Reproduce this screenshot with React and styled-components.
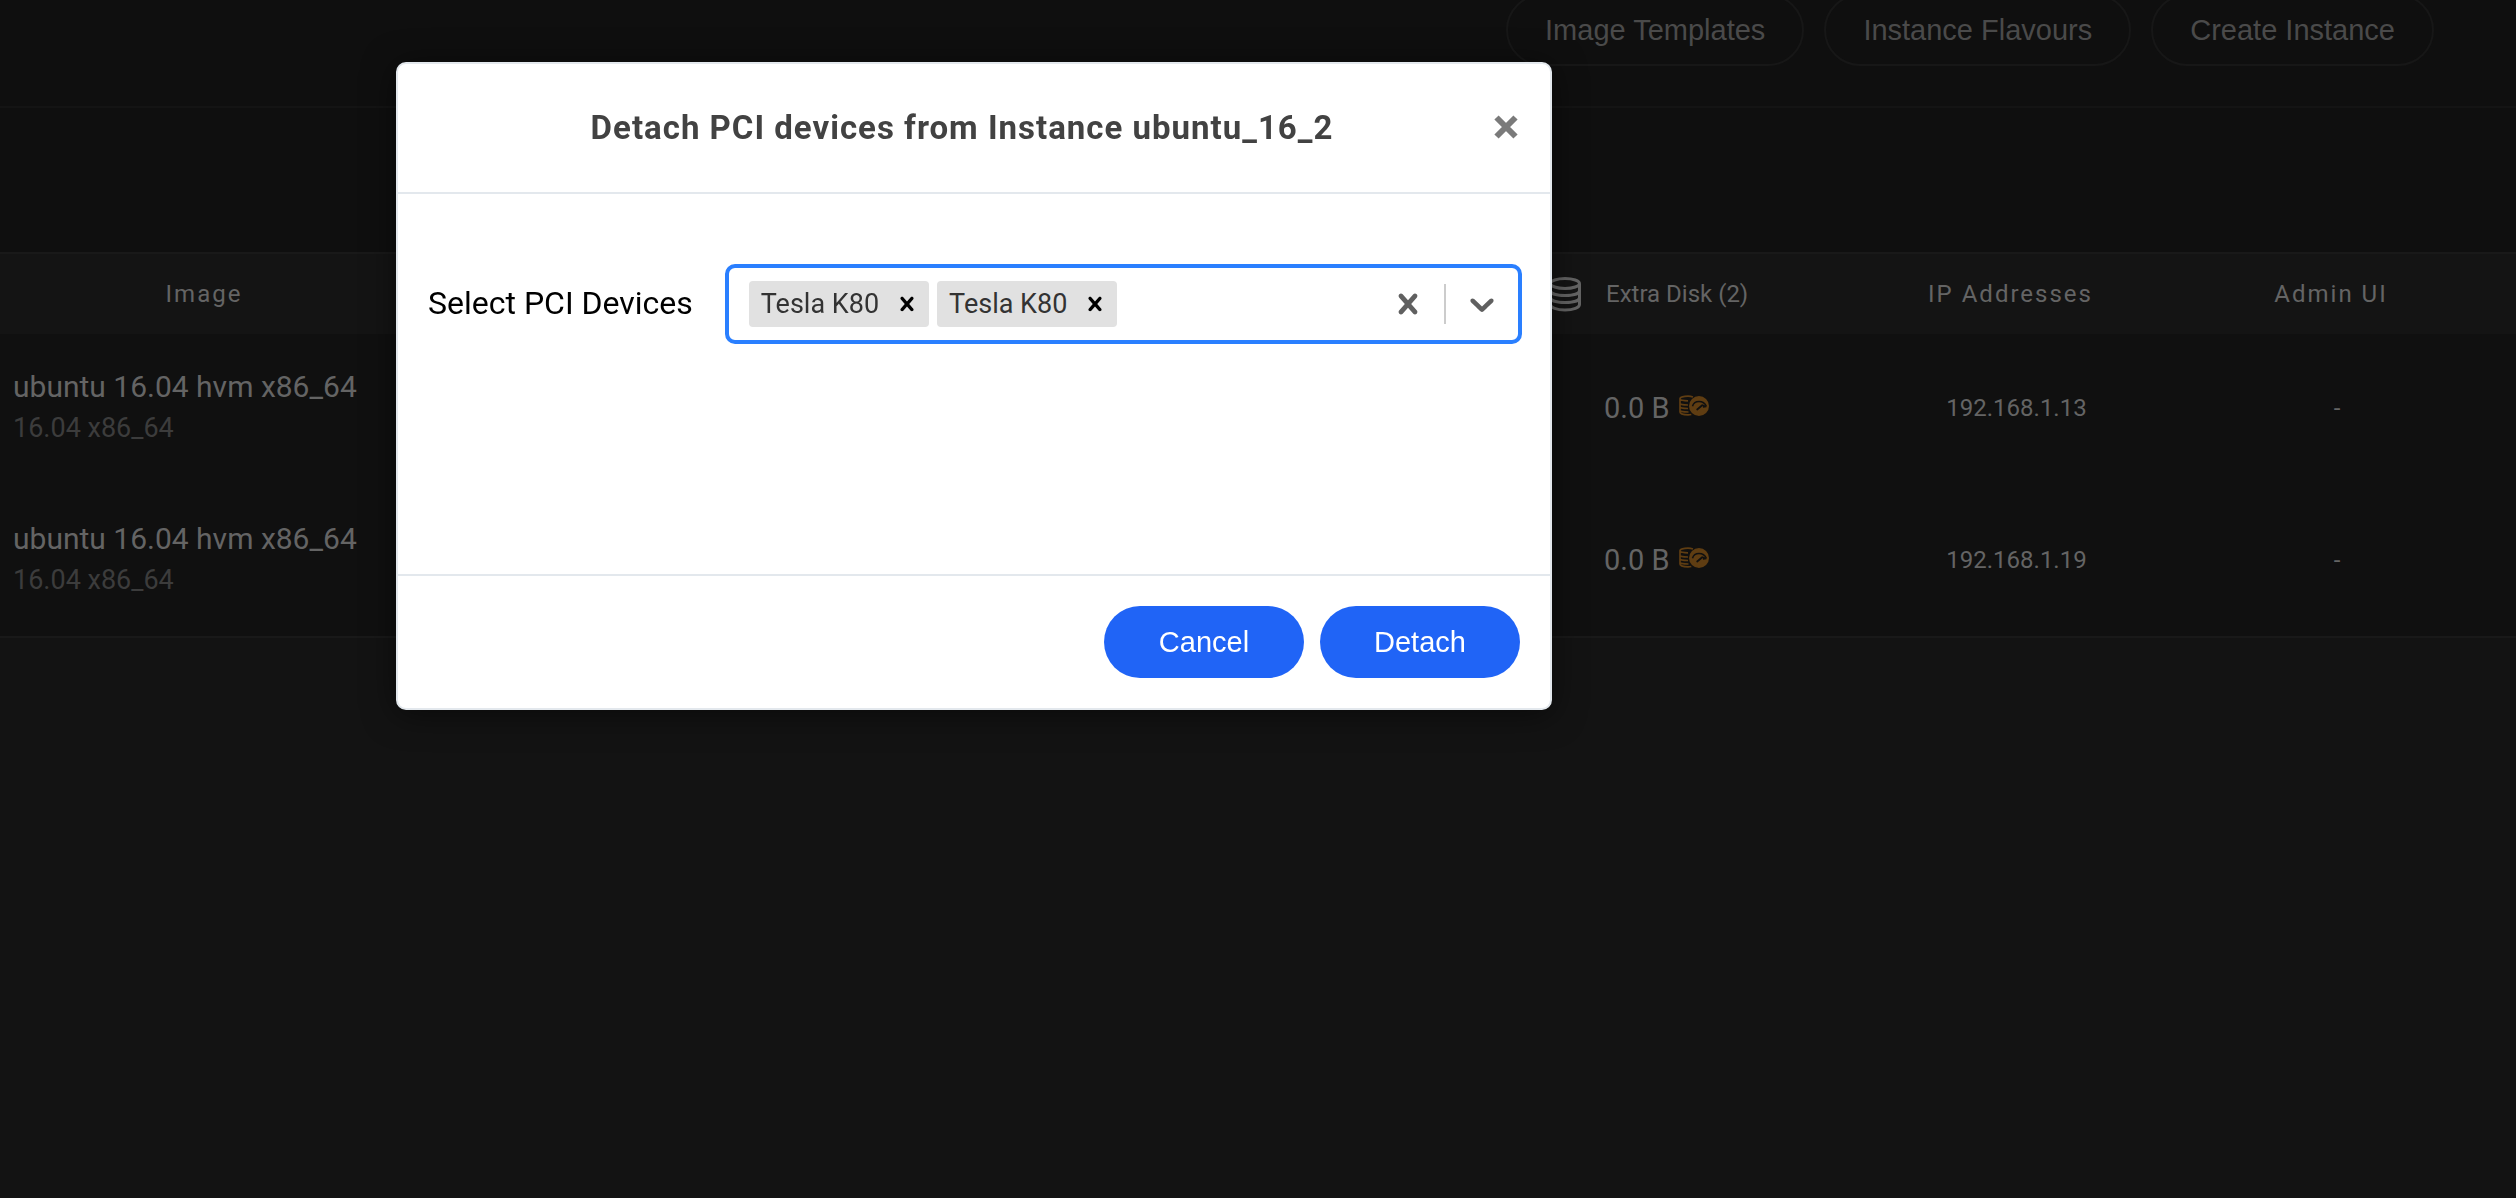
import React, {useState} from 'react';
import styled, {createGlobalStyle} from 'styled-components';

const columns = [
  {key: 'image', label: 'Image', width: 408},
  {key: 'spec', label: ''},
  {key: 'disk', label: 'Extra Disk (2)', width: 230},
  {key: 'ip', label: 'IP Addresses', width: 481},
  {key: 'admin', label: 'Admin UI', width: 160},
  {key: 'more', label: '', width: 105},
];

const instances = [
  {id: 1, image: 'ubuntu 16.04 hvm x86_64', version: '16.04 x86_64', disk: '0.0 B', ip: '192.168.1.13', admin: '-'},
  {id: 2, image: 'ubuntu 16.04 hvm x86_64', version: '16.04 x86_64', disk: '0.0 B', ip: '192.168.1.19', admin: '-'},
];

const DatabaseIcon = () => (
  <svg width="34" height="36" viewBox="0 0 34 36" fill="none" stroke="currentColor" strokeWidth="3">
    <ellipse cx="17" cy="7.5" rx="14.5" ry="5"/>
    <path d="M2.5 8v20.500c0 3 6 5.500 14.500 5.500s14.500-2.500 14.500-5.500V8"/>
    <path d="M2.500 14.500c0 3 6 5 14.500 5s14.500-2 14.500-5M2.500 21.500c0 3 6 5 14.500 5s14.500-2 14.500-5"/>
  </svg>
);

const DiskSpeedIcon = () => (
  <svg width="30" height="22" viewBox="0 0 30 22" fill="none" stroke="currentColor">
    <path
      strokeWidth="1.7"
      d="M14 2C12.500 1.500 11 1.200 9 1.200 4.500 1.200 1 2.200 1 3.500v13.500c0 1.600 3.500 2.800 8 2.800 1 0 2.300-.1 3.300-.3M1 3.500c0 1.400 3.500 2.300 8 2.300M1 8c0 1.200 3.500 2 8 2M1 11.500c0 1.200 3.500 2 8 2M1 15c0 1.200 3.500 2 8.500 2"
    />
    <circle cx="20" cy="11" r="10" fill="currentColor" stroke="none"/>
    <path d="M13.500 11.200c1-3.400 3.500-4.700 6.500-4.700s6 1.600 7.500 5" stroke="#101010" strokeWidth="1.500"/>
    <path d="M23.500 9.500c1.600 0 3 .8 4 2.700l-3.500.6z" fill="#101010" stroke="none"/>
    <path d="M18.200 14.500l5-4.200" stroke="#101010" strokeWidth="1.800" strokeLinecap="round"/>
  </svg>
);

const CrossIcon = ({size}) => (
  <svg width={size} height={size} viewBox="0 0 20 20" fill="currentColor">
    <path d="M14.348 14.849c-0.469 0.469-1.229 0.469-1.697 0l-2.651-3.030-2.651 3.029c-0.469 0.469-1.229 0.469-1.697 0-0.469-0.469-0.469-1.229 0-1.697l2.758-3.15-2.759-3.152c-0.469-0.469-0.469-1.228 0-1.697s1.228-0.469 1.697 0l2.652 3.031 2.651-3.031c0.469-0.469 1.228-0.469 1.697 0s0.469 1.229 0 1.697l-2.758 3.152 2.758 3.15c0.469 0.469 0.469 1.229 0 1.698z"/>
  </svg>
);

const ChevronIcon = () => (
  <svg width="40" height="40" viewBox="0 0 20 20" fill="currentColor">
    <path d="M4.516 7.548c0.436-0.446 1.043-0.481 1.576 0l3.908 3.747 3.908-3.747c0.533-0.481 1.141-0.446 1.574 0 0.436 0.445 0.408 1.197 0 1.615-0.406 0.418-4.695 4.502-4.695 4.502-0.217 0.223-0.502 0.335-0.787 0.335s-0.57-0.112-0.789-0.335c0 0-4.287-4.084-4.695-4.502s-0.436-1.17 0-1.615z"/>
  </svg>
);

const CloseIcon = () => (
  <svg width="24" height="24" viewBox="0 0 24 24" fill="none" stroke="currentColor" strokeWidth="6">
    <path d="M2.500 2.500l19 19M21.500 2.500l-19 19"/>
  </svg>
);

const InstancesPage = () => (
  <Page>
    <Toolbar>
      <OutlineButton type="button">Image Templates</OutlineButton>
      <OutlineButton type="button">Instance Flavours</OutlineButton>
      <OutlineButton type="button">Create Instance</OutlineButton>
    </Toolbar>
    <Table>
      <colgroup>
        {columns.map(({key, width}) => <col key={key} width={width}/>)}
      </colgroup>
      <thead>
        <tr>
          {columns.map(({key, label}) => (
            <HeadCell key={key}>
              {key === 'disk' ? (
                <DiskHead>
                  <DatabaseIcon/>
                  <DiskLabel>{label}</DiskLabel>
                </DiskHead>
              ) : label}
            </HeadCell>
          ))}
        </tr>
      </thead>
      <tbody>
        {instances.map((instance) => (
          <Row key={instance.id}>
            <ImageCell>
              <ImageName>{instance.image}</ImageName>
              <ImageVersion>{instance.version}</ImageVersion>
            </ImageCell>
            <Cell/>
            <Cell>
              <DiskSize>
                {instance.disk}
                <DiskSpeedIcon/>
              </DiskSize>
            </Cell>
            <Cell>{instance.ip}</Cell>
            <Cell>{instance.admin}</Cell>
            <Cell/>
          </Row>
        ))}
      </tbody>
    </Table>
  </Page>
);

const App = () => {
  const [devices, setDevices] = useState([
    {id: 1, name: 'Tesla K80'},
    {id: 2, name: 'Tesla K80'},
  ]);

  const onRemove = (id) => setDevices(devices.filter((device) => device.id !== id));

  return (
    <>
      <GlobalStyle/>
      <InstancesPage/>
      <Overlay>
        <Modal role="dialog" aria-labelledby="modal-title">
          <ModalHeader>
            <Title id="modal-title">Detach PCI devices from Instance ubuntu_16_2</Title>
            <CloseButton type="button" aria-label="Close"><CloseIcon/></CloseButton>
          </ModalHeader>
          <ModalBody>
            <Label htmlFor="pci-devices">Select PCI Devices</Label>
            <Select>
              <Values>
                {devices.map(({id, name}) => (
                  <Chip key={id}>
                    <ChipLabel>{name}</ChipLabel>
                    <ChipRemove type="button" aria-label={`Remove ${name}`} onClick={() => onRemove(id)}>
                      <CrossIcon size={28}/>
                    </ChipRemove>
                  </Chip>
                ))}
                <SelectInput id="pci-devices" type="text" autoComplete="off"/>
              </Values>
              <Indicator type="button" aria-label="Clear" onClick={() => setDevices([])}>
                <CrossIcon size={40}/>
              </Indicator>
              <Separator/>
              <Indicator type="button" aria-label="Open menu"><ChevronIcon/></Indicator>
            </Select>
          </ModalBody>
          <ModalFooter>
            <PrimaryButton type="button">Cancel</PrimaryButton>
            <PrimaryButton type="button">Detach</PrimaryButton>
          </ModalFooter>
        </Modal>
      </Overlay>
    </>
  );
};

export default App;

const GlobalStyle = createGlobalStyle`
  * {
    box-sizing: border-box;
  }

  body {
    margin: 0;
    background-color: #131313;
    font-family: Roboto, sans-serif;
  }

  button {
    font-family: "Liberation Sans", Arial, sans-serif;
    cursor: pointer;
  }

  svg {
    display: block;
    flex: none;
  }
`;

const Page = styled.div`
  overflow: hidden;
`;

const Toolbar = styled.div`
  display: flex;
  justify-content: flex-end;
  align-items: flex-end;
  gap: 20px;
  height: 108px;
  padding: 0 82px 40px;
  background-color: #0f0f0f;
  border-bottom: 2px solid #141414;
`;

const OutlineButton = styled.button`
  flex: none;
  height: 72px;
  padding: 0 37px;
  background: none;
  border: 2px solid #171717;
  border-radius: 36px;
  color: #4a4a4a;
  font-size: 29px;
`;

const Table = styled.table`
  width: 100%;
  border-top: 144px solid #0f0f0f;
  border-spacing: 0;
  table-layout: fixed;
  background-color: #101010;
`;

const HeadCell = styled.th`
  height: 82px;
  padding: 0;
  background-color: #141414;
  border-top: 2px solid #191919;
  color: #646464;
  font-size: 24px;
  font-weight: 400;
  letter-spacing: 2px;
`;

const DiskHead = styled.div`
  display: flex;
  align-items: center;
  gap: 24px;
  padding: 0 20px 0 8px;
`;

const DiskLabel = styled.span`
  overflow: hidden;
  letter-spacing: 0;
  white-space: nowrap;
`;

const Cell = styled.td`
  height: 152px;
  padding: 0 0 2px 12px;
  border-bottom: 2px solid transparent;
  color: #646464;
  font-size: 24px;
  text-align: center;
`;

const Row = styled.tr`
  &:last-child ${Cell} {
    border-bottom-color: #191919;
  }
`;

const ImageCell = styled(Cell)`
  padding: 0 13px 2px;
  text-align: left;
  white-space: nowrap;
`;

const ImageName = styled.div`
  font-size: 30px;
  line-height: 40px;
`;

const ImageVersion = styled.div`
  color: #3c3c3c;
  font-size: 27px;
  line-height: 42px;
`;

const DiskSize = styled.div`
  display: flex;
  align-items: center;
  gap: 9px;
  padding-left: 52px;
  font-size: 29px;

  svg {
    margin-bottom: 4px;
    color: #5f3d12;
  }
`;

const Overlay = styled.div`
  position: fixed;
  inset: 0;
  padding: 62px 40px 0 396px;
`;

const Modal = styled.div`
  max-width: 1156px;
  background-color: #fff;
  border: 2px solid #e3e8ed;
  border-radius: 10px;
  box-shadow: 0 4px 32px rgb(0 0 0 / 50%);
`;

const ModalHeader = styled.div`
  display: flex;
  align-items: center;
  height: 130px;
  padding: 0 32px 2px;
  border-bottom: 2px solid #e3e8ed;
`;

const Title = styled.h2`
  flex: 1;
  margin: 0;
  color: #424242;
  font-size: 33px;
  font-weight: 700;
  letter-spacing: 1px;
  text-align: center;
`;

const CloseButton = styled.button`
  padding: 0;
  background: none;
  border: 0;
  color: #7a7a7a;
`;

const ModalBody = styled.div`
  display: flex;
  align-items: flex-start;
  gap: 32px;
  height: 380px;
  padding: 70px 28px 0 30px;
`;

const Label = styled.label`
  flex: none;
  color: #000;
  font-size: 32px;
  line-height: 78px;
`;

const Select = styled.div`
  display: flex;
  align-items: stretch;
  flex: 1;
  min-width: 0;
  height: 80px;
  border: 4px solid #2a7fff;
  border-radius: 10px;
`;

const Values = styled.div`
  display: flex;
  align-items: center;
  flex: 1;
  gap: 8px;
  min-width: 0;
  padding: 0 20px;
`;

const Chip = styled.div`
  display: flex;
  align-items: center;
  flex: none;
  height: 46px;
  background-color: #e1e1e1;
  border-radius: 4px;
`;

const ChipLabel = styled.span`
  padding: 0 6px 0 12px;
  color: #333;
  font-size: 27px;
`;

const ChipRemove = styled.button`
  padding: 0 8px;
  background: none;
  border: 0;
  color: #000;
`;

const SelectInput = styled.input`
  flex: 1;
  width: 0;
  min-width: 0;
  padding: 0;
  background: none;
  border: 0;
  outline: 0;
  font-family: Roboto, sans-serif;
  font-size: 27px;
`;

const Indicator = styled.button`
  flex: none;
  padding: 0 16px;
  background: none;
  border: 0;
  color: #606060;
`;

const Separator = styled.span`
  flex: none;
  width: 2px;
  margin: 16px 0;
  background-color: #ccc;
`;

const ModalFooter = styled.div`
  display: flex;
  justify-content: flex-end;
  gap: 16px;
  padding: 30px;
  border-top: 2px solid #e3e8ed;
`;

const PrimaryButton = styled.button`
  width: 200px;
  height: 72px;
  background-color: #2064f6;
  border: 0;
  border-radius: 36px;
  color: #fff;
  font-size: 29px;
`;
